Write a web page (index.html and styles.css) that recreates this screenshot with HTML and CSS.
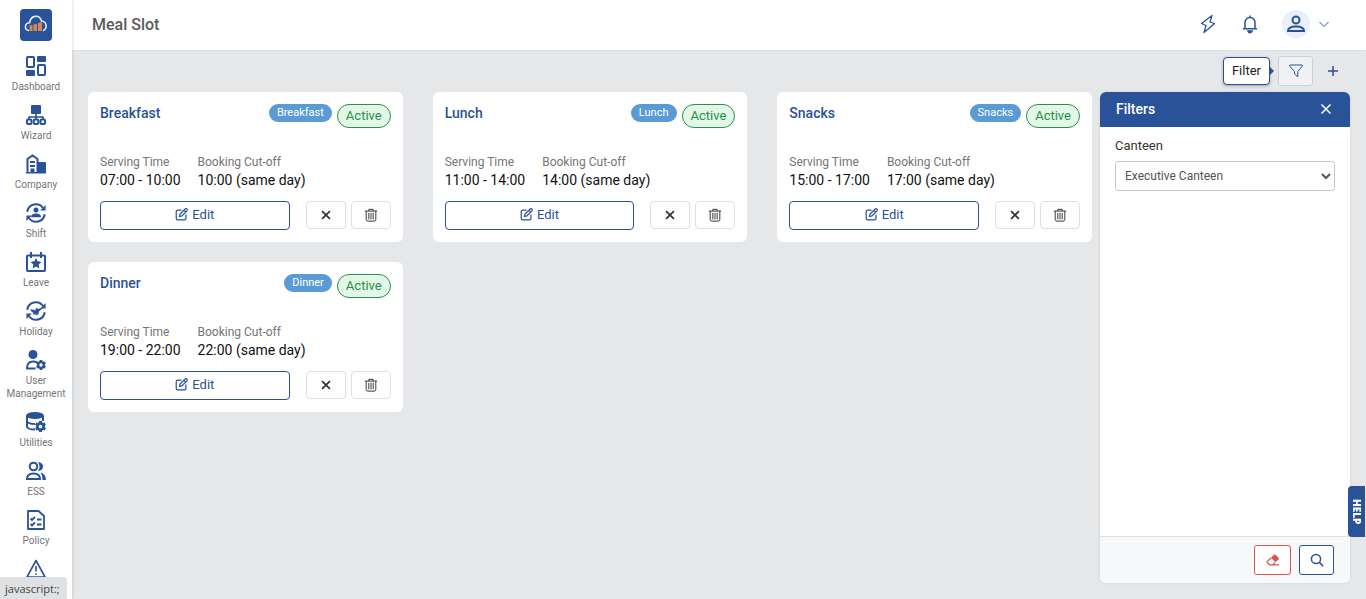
FILE: index.html
```
<!DOCTYPE html>
<html lang="en">
<head>
  <meta charset="UTF-8">
  <meta name="viewport" content="width=device-width, initial-scale=1.0">
  <title>Meal Slot</title>
  <link rel="stylesheet" href="styles.css">
</head>
<body>
  <!-- icons used on every card -->
  <svg class="sprite" aria-hidden="true">
    <symbol id="icon-edit" viewBox="0 0 16 16">
      <path d="M8 2.5H3.5a2 2 0 0 0-2 2v8a2 2 0 0 0 2 2h8a2 2 0 0 0 2-2V8" />
      <path d="M5.5 10.5l.7-3L12.500 1.300a1.200 1.200 0 0 1 2.200 2.200L8.500 9.800zM11 3l2 2" />
    </symbol>
    <symbol id="icon-close" viewBox="0 0 16 16">
      <path d="M3.500 3.500l9 9M12.500 3.500l-9 9" />
    </symbol>
    <symbol id="icon-trash" viewBox="0 0 16 16">
      <path d="M1 3.500h14M5.500 3.500V1.500h5v2M2.500 3.500v9.500q0 2 2 2h7q2 0 2-2V3.500M5.500 5.500v7.500M8 5.500v7.500M10.500 5.500v7.500" />
    </symbol>
    <symbol id="icon-gear" viewBox="0 0 10 10">
      <path fill="currentColor" fill-rule="evenodd" d="M3.800 0h2.400l.3 1.200 1 .6 1.200-.4 1.200 2-.9.900v1.400l.9.900-1.200 2-1.200-.4-1 .6-.3 1.200H3.800l-.3-1.200-1-.6-1.200.4-1.200-2 .9-.9V4.300l-.9-.9 1.200-2 1.200.4 1-.6zM5 3.300a1.700 1.700 0 1 0 0 3.400 1.700 1.700 0 0 0 0-3.400z" />
    </symbol>
    <symbol id="icon-cycle" viewBox="0 0 24 24">
      <path fill="none" stroke="currentColor" stroke-width="2.400" d="M1.500 10.500A10.500 10.500 0 0 1 20.500 6M22.500 13.500A10.500 10.500 0 0 1 3.500 18" />
      <path fill="currentColor" d="M23.500 2.500V9H17zM.5 21.500V15H7z" />
    </symbol>
  </svg>

  <aside class="sidebar">
    <a class="logo" href="#" aria-label="Home">
      <svg viewBox="0 0 32 32">
        <path fill="none" stroke="#e2ebfa" stroke-width="1.600" stroke-linecap="round" d="M8.500 21.500C4 20.500 4.500 14 9.500 13.800 11 5.500 19.500 5.500 21.500 12c5.500.5 6 7.500 2 9.500" />
        <path fill="#d98850" d="M9.500 16.500l3-.5v6h-3zM13.500 15.500l3.500-.5v7h-3.500zM18 14l4-1v9h-4z" />
      </svg>
    </a>
    <nav class="menu">
      <a class="menu-item" href="#">
        <svg viewBox="0 0 20 20">
          <rect x="1" y="1" width="7" height="10" rx="1" fill="none" stroke="currentColor" stroke-width="2" />
          <rect x="12" y="9" width="7" height="10" rx="1" fill="none" stroke="currentColor" stroke-width="2" />
          <rect x="11" width="9" height="6" rx="1" fill="currentColor" />
          <rect y="14" width="9" height="6" rx="1" fill="currentColor" />
        </svg>
        <span>Dashboard</span>
      </a>
      <a class="menu-item" href="#">
        <svg viewBox="0 0 20 20">
          <rect x="5" width="10" height="9" rx="1" fill="currentColor" />
          <path fill="none" stroke="currentColor" stroke-width="1.600" d="M10 8v7M3 15v-3h14v3" />
          <rect x="1" y="14.500" width="4.500" height="4.500" rx="1" fill="#fff" stroke="currentColor" stroke-width="2" />
          <rect x="7.800" y="14.500" width="4.500" height="4.500" rx="1" fill="#fff" stroke="currentColor" stroke-width="2" />
          <rect x="14.500" y="14.500" width="4.500" height="4.500" rx="1" fill="#fff" stroke="currentColor" stroke-width="2" />
        </svg>
        <span>Wizard</span>
      </a>
      <a class="menu-item" href="#">
        <svg viewBox="0 0 20 20">
          <path fill="none" stroke="currentColor" stroke-width="2" d="M1.500 18.500V5l5-3.500L11.500 5v13.500M4 8h5M4 12h5M5.500 19v-3.500h2V19" />
          <path fill="currentColor" d="M12 8h7q1 0 1 1v10.500h-8zM0 18h13v1.500H0z" />
        </svg>
        <span>Company</span>
      </a>
      <a class="menu-item" href="#">
        <svg viewBox="0 0 24 24">
          <use href="#icon-cycle" />
          <circle cx="12" cy="8.500" r="3" fill="currentColor" />
          <path fill="currentColor" d="M6 17q0-4.500 6-4.500t6 4.500z" />
        </svg>
        <span>Shift</span>
      </a>
      <a class="menu-item" href="#">
        <svg viewBox="0 0 20 20">
          <path fill="none" stroke="currentColor" stroke-width="2" d="M2 3.500h16q1 0 1 1V18q0 1-1 1H2q-1 0-1-1V4.500q0-1 1-1zM5 0v6M15 0v6" />
          <path fill="currentColor" d="M10 6l1.600 3.200 3.900.6-2.800 2.700.7 3.900-3.400-1.900-3.400 1.900.7-3.900-2.800-2.700 3.900-.6z" />
        </svg>
        <span>Leave</span>
      </a>
      <a class="menu-item" href="#">
        <svg viewBox="0 0 24 24">
          <use href="#icon-cycle" />
          <path fill="currentColor" d="M5 10l4 .5 2 1 1.500-3.500 2 1.500L18.500 8l.5 1.500-3.500 3-.5 3-2.500 2-1-2-2.500 1-.5-2.500-2.500-2z" />
        </svg>
        <span>Holiday</span>
      </a>
      <a class="menu-item" href="#">
        <svg viewBox="0 0 20 20">
          <circle cx="7" cy="4.500" r="4.500" fill="currentColor" />
          <path fill="none" stroke="currentColor" stroke-width="1.800" d="M9.500 18.500H1q0-7 6-7 2.500 0 4 1" />
          <use href="#icon-gear" x="10" y="10" width="10" height="10" />
        </svg>
        <span>User Management</span>
      </a>
      <a class="menu-item" href="#">
        <svg viewBox="0 0 20 20">
          <ellipse cx="9" cy="3.500" rx="9" ry="3.500" fill="currentColor" />
          <path fill="none" stroke="currentColor" stroke-width="2" d="M1 4v11q1 2.500 8 2.500M1 9.500q2 2.500 8 2.500M17 4v5" />
          <use href="#icon-gear" x="9" y="9" width="11" height="11" />
        </svg>
        <span>Utilities</span>
      </a>
      <a class="menu-item" href="#">
        <svg viewBox="0 0 20 20">
          <circle cx="7.500" cy="5.500" r="3.800" fill="none" stroke="currentColor" stroke-width="2" />
          <path fill="none" stroke="currentColor" stroke-width="2" d="M1 18q0-5.500 6.500-5.500T14 18z" />
          <path fill="currentColor" d="M12 1q5 .5 5 4.500T12 10q3-4.500 0-9zM14.500 11.500q5.500 1.500 5.500 7.500h-3.500q0-5-2-7.500z" />
        </svg>
        <span>ESS</span>
      </a>
      <a class="menu-item" href="#">
        <svg viewBox="0 0 20 20">
          <path fill="none" stroke="currentColor" stroke-width="1.800" stroke-linejoin="round" d="M2 1h10.500L18 6v13H2z" />
          <path fill="none" stroke="currentColor" stroke-width="1.800" d="M4.500 8.500L6 10l3-3M4.500 14L6 15.500l3-3M11 9.500h4.500M11 14.500h4.500" />
        </svg>
        <span>Policy</span>
      </a>
      <a class="menu-item" href="#" aria-label="Alerts">
        <svg viewBox="0 0 20 20">
          <path fill="none" stroke="currentColor" stroke-width="1.600" stroke-linejoin="round" d="M10 1.500L19 18H1z" />
          <path fill="none" stroke="currentColor" stroke-width="1.600" d="M10 7v5.500M10 14.200v1.600" />
        </svg>
      </a>
    </nav>
  </aside>

  <div class="page">
    <header class="topbar">
      <h1>Meal Slot</h1>
      <div class="top-actions">
        <button class="top-btn" aria-label="Quick links">
          <svg width="20" height="20" viewBox="0 0 20 20"><path stroke-width="1.300" stroke-linejoin="round" d="M14 1.500L3.500 9.500l4.500 2-2 7L16.500 9.500 12 8z" /></svg>
        </button>
        <button class="top-btn" aria-label="Notifications">
          <svg width="20" height="20" viewBox="0 0 20 20"><path d="M5 14.500V8.500a5 5 0 0 1 10 0v6M3 14.800h14M10 3.500v-2" /><path fill="currentColor" d="M8 17h4l-1 1.500H9z" /></svg>
        </button>
        <button class="profile" aria-label="Profile">
          <span class="avatar">
            <svg width="20" height="20" viewBox="0 0 20 20"><circle cx="10" cy="6" r="3.500" /><path d="M2 17q0-4.500 8-4.500t8 4.500z" /></svg>
          </span>
          <svg width="10" height="10" viewBox="0 0 10 10"><path class="thin" d="M.5 3L5 7.500 9.500 3" /></svg>
        </button>
      </div>
    </header>

    <main class="content">
      <div class="toolbar">
        <span class="tooltip" role="tooltip">Filter</span>
        <button class="btn-filter" aria-label="Filter">
          <svg width="14" height="14" viewBox="0 0 14 14"><path d="M.8 1h12.400v1.200L8.800 7.500v5.300L5.500 10V7.500L.8 2.200z" /></svg>
        </button>
        <button class="btn-add" aria-label="Add meal slot">
          <svg width="12" height="12" viewBox="0 0 12 12"><path d="M6 1v10M1 6h10" /></svg>
        </button>
      </div>

      <div class="columns">
        <div class="cards">
          <section class="card">
            <div class="card-head">
              <h2>Breakfast</h2>
              <span class="badge-type">Breakfast</span>
              <span class="badge-status">Active</span>
            </div>
            <dl class="times">
              <div><dt>Serving Time</dt><dd>07:00 - 10:00</dd></div>
              <div><dt>Booking Cut-off</dt><dd>10:00 (same day)</dd></div>
            </dl>
            <div class="card-actions">
              <button class="btn-edit"><svg><use href="#icon-edit" /></svg>Edit</button>
              <button class="btn-icon" aria-label="Deactivate"><svg class="cross"><use href="#icon-close" /></svg></button>
              <button class="btn-icon" aria-label="Delete"><svg><use href="#icon-trash" /></svg></button>
            </div>
          </section>

          <section class="card">
            <div class="card-head">
              <h2>Lunch</h2>
              <span class="badge-type">Lunch</span>
              <span class="badge-status">Active</span>
            </div>
            <dl class="times">
              <div><dt>Serving Time</dt><dd>11:00 - 14:00</dd></div>
              <div><dt>Booking Cut-off</dt><dd>14:00 (same day)</dd></div>
            </dl>
            <div class="card-actions">
              <button class="btn-edit"><svg><use href="#icon-edit" /></svg>Edit</button>
              <button class="btn-icon" aria-label="Deactivate"><svg class="cross"><use href="#icon-close" /></svg></button>
              <button class="btn-icon" aria-label="Delete"><svg><use href="#icon-trash" /></svg></button>
            </div>
          </section>

          <section class="card">
            <div class="card-head">
              <h2>Snacks</h2>
              <span class="badge-type">Snacks</span>
              <span class="badge-status">Active</span>
            </div>
            <dl class="times">
              <div><dt>Serving Time</dt><dd>15:00 - 17:00</dd></div>
              <div><dt>Booking Cut-off</dt><dd>17:00 (same day)</dd></div>
            </dl>
            <div class="card-actions">
              <button class="btn-edit"><svg><use href="#icon-edit" /></svg>Edit</button>
              <button class="btn-icon" aria-label="Deactivate"><svg class="cross"><use href="#icon-close" /></svg></button>
              <button class="btn-icon" aria-label="Delete"><svg><use href="#icon-trash" /></svg></button>
            </div>
          </section>

          <section class="card">
            <div class="card-head">
              <h2>Dinner</h2>
              <span class="badge-type">Dinner</span>
              <span class="badge-status">Active</span>
            </div>
            <dl class="times">
              <div><dt>Serving Time</dt><dd>19:00 - 22:00</dd></div>
              <div><dt>Booking Cut-off</dt><dd>22:00 (same day)</dd></div>
            </dl>
            <div class="card-actions">
              <button class="btn-edit"><svg><use href="#icon-edit" /></svg>Edit</button>
              <button class="btn-icon" aria-label="Deactivate"><svg class="cross"><use href="#icon-close" /></svg></button>
              <button class="btn-icon" aria-label="Delete"><svg><use href="#icon-trash" /></svg></button>
            </div>
          </section>
        </div>

        <form class="filters">
          <div class="filters-head">
            <h2>Filters</h2>
            <button type="button" aria-label="Close filters">
              <svg width="16" height="16"><use href="#icon-close" /></svg>
            </button>
          </div>
          <div class="filters-body">
            <label for="canteen">Canteen</label>
            <select id="canteen">
              <option>Executive Canteen</option>
            </select>
          </div>
          <div class="filters-foot">
            <button class="btn-clear" type="reset" aria-label="Clear">
              <svg width="14" height="12" viewBox="0 0 14 12"><path fill="currentColor" stroke="none" d="M8 .8q.8-.6 1.500 0l3 3q.7.800 0 1.500L9.500 8.300 5 3.800z" /><path stroke-width="1.200" d="M5 4L1.300 7.300q-.6.700 0 1.400L3.500 10.800h9.500M9 8.500l-2.300 2.300" /></svg>
            </button>
            <button class="btn-search" type="submit" aria-label="Search">
              <svg width="14" height="14" viewBox="0 0 14 14"><circle cx="6" cy="6" r="4.600" /><path d="M9.400 9.400l3.800 3.800" /></svg>
            </button>
          </div>
        </form>
      </div>
    </main>
  </div>

  <button class="help">HELP</button>
  <div class="status">javascript:;</div>
</body>
</html>
```

FILE: styles.css
```
* {
  box-sizing: border-box;
}

body {
  margin: 0;
  display: flex;
  height: 100vh;
  overflow: hidden;
  font-family: Roboto, "Liberation Sans", sans-serif;
  font-size: 14px;
  color: #333;
  background-color: #e5e7e9;
}

h1, h2, dl, dd {
  margin: 0;
}

button, select {
  font-family: inherit;
  font-size: 13px;
}

button {
  display: flex;
  align-items: center;
  justify-content: center;
  padding: 0;
  border: none;
  background: none;
  color: #2a5298;
  cursor: pointer;
}

button svg {
  fill: none;
  stroke: currentColor;
  stroke-width: 1.5;
}

.sprite {
  position: absolute;
  width: 0;
  height: 0;
}

/* sidebar */
.sidebar {
  flex: none;
  width: 72px;
  padding-top: 9px;
  background-color: #fff;
  box-shadow: 0 0 3px rgba(0, 0, 0, 0.2);
  z-index: 2;
  overflow: hidden;
}

.logo {
  display: block;
  width: 32px;
  height: 32px;
  margin: 0 auto 15px;
  border-radius: 4px;
  background-color: #2a5298;
}

.menu {
  display: flex;
  flex-direction: column;
  gap: 12px;
}

.menu-item {
  display: flex;
  flex-direction: column;
  align-items: center;
  gap: 4px;
  color: #2a5298;
  text-decoration: none;
}

.menu-item svg {
  width: 20px;
  height: 20px;
}

.menu-item span {
  color: #757575;
  font-size: 10px;
  line-height: 13px;
  text-align: center;
}

/* top bar */
.page {
  flex: 1;
  min-width: 0;
  display: flex;
  flex-direction: column;
}

.topbar {
  display: flex;
  align-items: center;
  justify-content: space-between;
  height: 50px;
  padding: 0 37px 2px 20px;
  background-color: #fff;
  box-shadow: 0 0 2px rgba(0, 0, 0, 0.1);
}

.topbar h1 {
  font-size: 16px;
  font-weight: 500;
  color: #5a5a5a;
}

.top-actions {
  display: flex;
  align-items: center;
  gap: 22px;
}

.profile {
  gap: 9px;
}

.profile .thin {
  stroke-width: 1;
}

.avatar {
  display: flex;
  align-items: center;
  justify-content: center;
  width: 28px;
  height: 28px;
  border-radius: 50%;
  background-color: #e9f0fc;
}

.avatar svg {
  stroke-width: 2;
}

/* content */
.content {
  flex: 1;
  min-height: 0;
  display: flex;
  flex-direction: column;
  padding: 6px 16px 16px;
}

.toolbar {
  display: flex;
  align-items: center;
  justify-content: flex-end;
  height: 30px;
  margin-bottom: 6px;
}

.tooltip {
  position: relative;
  height: 28px;
  padding: 0 8px;
  margin-right: 8px;
  border: 1px solid #2a5298;
  border-radius: 4px;
  background-color: #fff;
  box-shadow: 0 1px 3px rgba(0, 0, 0, 0.3);
  color: #222;
  font-size: 13px;
  line-height: 26px;
}

.tooltip::after {
  content: "";
  position: absolute;
  left: 100%;
  top: 8px;
  border: 5px solid transparent;
  border-left-color: #2a5298;
  border-right: none;
}

.btn-filter {
  width: 35px;
  height: 30px;
  border: 1px solid #cdd1d6;
  border-radius: 3px;
  background-color: #eff1f4;
}

.btn-filter svg {
  stroke-width: 1;
}

.btn-add {
  width: 37px;
  height: 30px;
  padding-left: 3px;
}

.columns {
  flex: 1;
  min-height: 0;
  display: flex;
  gap: 8px;
}

.cards {
  flex: 1;
  display: grid;
  grid-template-columns: repeat(3, 1fr);
  gap: 20px 30px;
  align-content: start;
}

.card {
  padding: 12px;
  border-radius: 6px;
  background-color: #fff;
}

.card-head {
  display: flex;
  align-items: flex-start;
  gap: 5px;
  height: 50px;
}

.card-head h2 {
  flex: 1;
  color: #2a5298;
  font-size: 14px;
  font-weight: 500;
  line-height: 18px;
}

.badge-type {
  padding: 0 8px;
  border-radius: 9px;
  background-color: #5b9bd5;
  color: #fff;
  font-size: 11px;
  line-height: 18px;
}

.badge-status {
  padding: 0 8px;
  border: 1px solid #28914a;
  border-radius: 12px;
  background-color: #e3f7e8;
  color: #28914a;
  font-size: 13px;
  line-height: 22px;
}

.times {
  display: flex;
  gap: 17px;
  margin-bottom: 11px;
}

.times dt {
  color: #757575;
  font-size: 12px;
  line-height: 16px;
}

.times dd {
  color: #111;
  line-height: 20px;
}

.card-actions {
  display: flex;
  gap: 5px;
}

.btn-edit {
  flex: 1;
  gap: 4px;
  height: 29px;
  padding-bottom: 2px;
  margin-right: 11px;
  border: 1px solid #2a5298;
  border-radius: 4px;
}

.btn-edit svg {
  width: 13px;
  height: 13px;
}

.btn-icon {
  width: 40px;
  height: 28px;
  border: 1px solid #dee0e3;
  border-radius: 4px;
  color: #333;
}

.btn-icon svg {
  width: 14px;
  height: 14px;
  stroke-width: 1.1;
}

.btn-icon .cross {
  stroke-width: 2;
}

/* filter panel */
.filters {
  flex: none;
  width: 250px;
  display: flex;
  flex-direction: column;
  border-radius: 6px;
  background-color: #fff;
  box-shadow: 0 0 3px rgba(0, 0, 0, 0.1);
  overflow: hidden;
}

.filters-head {
  display: flex;
  align-items: center;
  justify-content: space-between;
  height: 35px;
  padding: 0 16px 2px;
  background-color: #2a5298;
}

.filters-head h2 {
  color: #fff;
  font-size: 14px;
  font-weight: 500;
}

.filters-head button {
  color: #fff;
}

.filters-body {
  flex: 1;
  padding: 10px 15px;
}

.filters-body label {
  display: block;
  margin-bottom: 7px;
  font-size: 13px;
  line-height: 17px;
}

.filters-body select {
  width: 100%;
  height: 30px;
  padding: 0 5px;
  border: 1px solid #c4c8cc;
  border-radius: 3px;
  background-color: #fff;
  color: #555;
  font-size: 12px;
}

.filters-foot {
  display: flex;
  justify-content: flex-end;
  gap: 8px;
  padding: 8px 16px;
  border-top: 1px solid #dee2e6;
  background-color: #f6f8fa;
}

.filters-foot button {
  height: 30px;
  border: 1px solid currentColor;
  border-radius: 3px;
  background-color: #fff;
}

.filters-foot .btn-clear {
  width: 37px;
  color: #d9534f;
}

.btn-search {
  width: 35px;
}

.help {
  position: fixed;
  right: 1px;
  bottom: 62px;
  width: 17px;
  height: 51px;
  border-radius: 4px 0 0 4px;
  background-color: #2a5298;
  color: #fff;
  font-family: "Open Sans", sans-serif;
  font-size: 10px;
  font-weight: 800;
  writing-mode: vertical-rl;
  z-index: 3;
}

.status {
  position: fixed;
  left: 0;
  bottom: 0;
  height: 22px;
  padding: 0 7px 0 5px;
  border-radius: 0 4px 0 0;
  background-color: #dfe1e3;
  color: #444;
  font-family: "Open Sans", sans-serif;
  font-size: 11px;
  line-height: 23px;
  z-index: 4;
}
```
